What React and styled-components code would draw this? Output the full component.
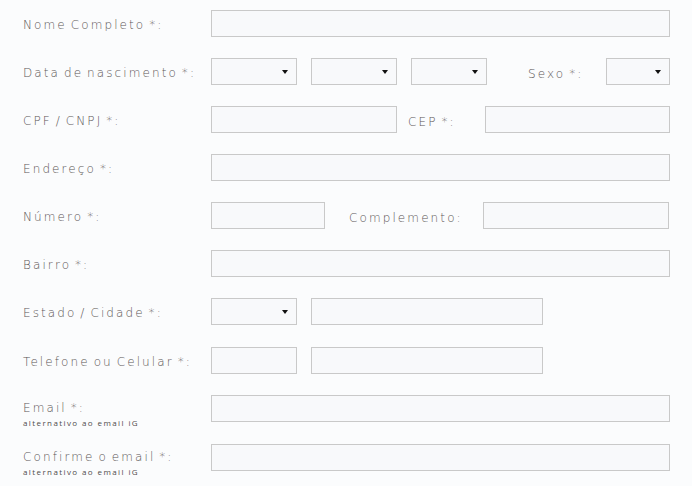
import React from "react";
import styled, { createGlobalStyle } from "styled-components";

const Global = createGlobalStyle`
  html, body {
    margin: 0;
    padding: 0;
    background: #fbfcfd;
  }
`;

const Form = styled.form`
  padding: 10px 0 0 23px;
  font-family: "DejaVu Sans", "Open Sans", sans-serif;
  font-weight: 200;
  color: #5c5656;
`;

const Row = styled.div`
  display: flex;
  align-items: center;
  height: 27px;
  margin-bottom: ${(p) => p.$gap || 21}px;
`;

const Label = styled.label`
  width: 188px;
  flex-shrink: 0;
  margin-top: ${(p) => (p.$sub ? 0 : 4)}px;
  padding-top: ${(p) => (p.$sub ? 12 : 0)}px;
  font-size: 12px;
  letter-spacing: 2.1px;
  word-spacing: -2px;
  line-height: 13px;
`;

const SubLabel = styled.span`
  display: block;
  margin-top: 3px;
  font-family: "Open Sans", sans-serif;
  font-size: 8px;
  font-weight: 400;
  letter-spacing: 1.4px;
  word-spacing: 0;
  line-height: 10px;
  color: #4f4b4b;
`;

const InlineLabel = styled.span`
  margin: 4px 0 0 ${(p) => p.$before}px;
  width: ${(p) => p.$w}px;
  flex-shrink: 0;
  font-size: 12px;
  letter-spacing: 2.1px;
  word-spacing: -2px;
`;

const Input = styled.input`
  box-sizing: border-box;
  width: ${(p) => p.$w}px;
  height: 27px;
  margin: 0 0 0 ${(p) => p.$before || 0}px;
  padding: 0 6px;
  border: 1px solid #c9c9c9;
  background: #f8f9fb;
  font: inherit;
  outline: none;
`;

const SelectBox = styled.div`
  position: relative;
  box-sizing: border-box;
  width: ${(p) => p.$w}px;
  height: 27px;
  margin-left: ${(p) => p.$before || 0}px;
  border: 1px solid #c9c9c9;
  background: #f8f9fb;

  &::after {
    content: "";
    position: absolute;
    right: 8px;
    top: 11px;
    border-left: 3px solid transparent;
    border-right: 3px solid transparent;
    border-top: 4px solid #111;
  }
`;

const Select = styled.select`
  appearance: none;
  width: 100%;
  height: 100%;
  border: 0;
  background: transparent;
  outline: none;
`;

const Dropdown = ({ w, before }) => (
  <SelectBox $w={w} $before={before}>
    <Select defaultValue="">
      <option value=""></option>
    </Select>
  </SelectBox>
);

export default function App() {
  return (
    <>
      <Global />
      <Form>
        <Row>
          <Label>Nome Completo *:</Label>
          <Input $w={459} />
        </Row>
        <Row>
          <Label>Data de nascimento *:</Label>
          <Dropdown w={86} />
          <Dropdown w={86} before={14} />
          <Dropdown w={76} before={14} />
          <InlineLabel $before={41} $w={78}>Sexo *:</InlineLabel>
          <Dropdown w={64} />
        </Row>
        <Row>
          <Label>CPF / CNPJ *:</Label>
          <Input $w={186} />
          <InlineLabel $before={11} $w={77}>CEP *:</InlineLabel>
          <Input $w={185} />
        </Row>
        <Row>
          <Label>Endereço *:</Label>
          <Input $w={459} />
        </Row>
        <Row>
          <Label>Número *:</Label>
          <Input $w={114} />
          <InlineLabel $before={24} $w={134}>Complemento:</InlineLabel>
          <Input $w={186} />
        </Row>
        <Row>
          <Label>Bairro *:</Label>
          <Input $w={459} />
        </Row>
        <Row $gap={22}>
          <Label>Estado / Cidade *:</Label>
          <Dropdown w={86} />
          <Input $w={232} $before={14} />
        </Row>
        <Row>
          <Label>Telefone ou Celular *:</Label>
          <Input $w={86} />
          <Input $w={232} $before={14} />
        </Row>
        <Row $gap={22}>
          <Label $sub>
            Email *:
            <SubLabel>alternativo ao email iG</SubLabel>
          </Label>
          <Input $w={459} />
        </Row>
        <Row>
          <Label $sub>
            Confirme o email *:
            <SubLabel>alternativo ao email iG</SubLabel>
          </Label>
          <Input $w={459} />
        </Row>
      </Form>
    </>
  );
}
